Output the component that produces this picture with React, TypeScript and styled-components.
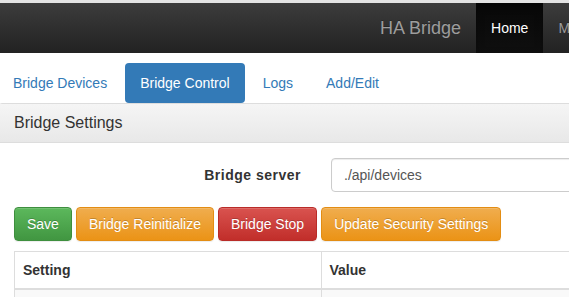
import styled, { createGlobalStyle, css } from 'styled-components';

type Variant = 'success' | 'warning' | 'danger';

const settings = [
	{ name: 'bridge.upnpconfigaddress', value: '192.168.1.20' },
	{ name: 'bridge.serverport', value: '8080' },
	{ name: 'bridge.upnpresponseport', value: '50000' },
];

const actions: { label: string; variant: Variant }[] = [
	{ label: 'Save', variant: 'success' },
	{ label: 'Bridge Reinitialize', variant: 'warning' },
	{ label: 'Bridge Stop', variant: 'danger' },
	{ label: 'Update Security Settings', variant: 'warning' },
];

function App() {
	return (
		<>
			<GlobalStyle />
			<Navbar>
				<Brand>HA Bridge</Brand>
				<NavLink $active>Home</NavLink>
				<NavLink>Manage</NavLink>
			</Navbar>

			<Page>
				<Pills>
					<Pill>Bridge Devices</Pill>
					<Pill $active>Bridge Control</Pill>
					<Pill>Logs</Pill>
					<Pill>Add/Edit</Pill>
				</Pills>

				<Panel>
					<PanelHeading>Bridge Settings</PanelHeading>
					<PanelBody>
						<FormRow>
							<Label>Bridge server</Label>
							<InputCell>
								<Input defaultValue="./api/devices" />
							</InputCell>
						</FormRow>

						<Buttons>
							{actions.map((a) => (
								<Button key={a.label} $variant={a.variant}>
									{a.label}
								</Button>
							))}
						</Buttons>

						<Table>
							<thead>
								<tr>
									<Th>Setting</Th>
									<Th>Value</Th>
								</tr>
							</thead>
							<tbody>
								{settings.map((s) => (
									<Tr key={s.name}>
										<Td>{s.name}</Td>
										<Td>{s.value}</Td>
									</Tr>
								))}
							</tbody>
						</Table>
					</PanelBody>
				</Panel>
			</Page>
		</>
	);
}

const GlobalStyle = createGlobalStyle`
	html, body {
		overflow: hidden;
	}
	body {
		margin: 0;
		background: #fff;
		color: #333;
		font-family: "Liberation Sans", Arial, sans-serif;
		font-size: 14px;
		line-height: 20px;
	}
	* {
		box-sizing: border-box;
	}
`;

const Navbar = styled.nav`
	display: flex;
	height: 53px;
	padding-left: 365px;
	border-top: 3px solid #e4e4e4;
	background: linear-gradient(to bottom, #3c3c3c 0%, #222 100%);
	white-space: nowrap;
	overflow: hidden;
`;

const Brand = styled.a`
	padding: 15px;
	font-size: 18px;
	line-height: 20px;
	color: #9d9d9d;
	text-shadow: 0 -1px 0 rgba(0, 0, 0, 0.25);
`;

const NavLink = styled.a<{ $active?: boolean }>`
	padding: 15px;
	line-height: 20px;
	color: #9d9d9d;
	text-shadow: 0 -1px 0 rgba(0, 0, 0, 0.25);

	${(p) =>
		p.$active &&
		css`
			color: #fff;
			background: linear-gradient(to bottom, #080808 0%, #0f0f0f 100%);
			box-shadow: inset 0 3px 9px rgba(0, 0, 0, 0.25);
		`}
`;

const Page = styled.div`
	margin-left: -2px;
	width: 660px;
`;

const Pills = styled.ul`
	display: flex;
	margin: 10px 0 0;
	padding: 0;
	list-style: none;
`;

const Pill = styled.li<{ $active?: boolean }>`
	padding: 10px 15px;
	border-radius: 4px;
	line-height: 20px;
	color: ${(p) => (p.$active ? '#fff' : '#337ab7')};
	background: ${(p) => (p.$active ? '#337ab7' : 'transparent')};

	& + & {
		margin-left: 3px;
	}
`;

const Panel = styled.section`
	border: 1px solid #ddd;
	border-radius: 4px;
`;

const PanelHeading = styled.h3`
	margin: 0;
	padding: 10px 15px;
	border-bottom: 1px solid #ddd;
	background: linear-gradient(to bottom, #f5f5f5 0%, #e8e8e8 100%);
	font-size: 16px;
	font-weight: normal;
	line-height: 18px;
	color: #333;
`;

const PanelBody = styled.div`
	padding: 15px;
`;

const FormRow = styled.div`
	display: grid;
	grid-template-columns: 302px 1fr;
	align-items: center;
`;

const Label = styled.label`
	padding-right: 15px;
	text-align: right;
	font-weight: bold;
	letter-spacing: 0.5px;
`;

const InputCell = styled.div`
	padding-left: 15px;
`;

const Input = styled.input`
	display: block;
	width: 100%;
	height: 34px;
	padding: 6px 12px;
	border: 1px solid #ccc;
	border-radius: 4px;
	box-shadow: inset 0 1px 1px rgba(0, 0, 0, 0.075);
	font-family: inherit;
	font-size: 14px;
	color: #555;
`;

const Buttons = styled.div`
	display: flex;
	gap: 4px;
	margin-top: 15px;
`;

const palette: Record<Variant, [string, string, string]> = {
	success: ['#5cb85c', '#419641', '#3e8f3e'],
	warning: ['#f0ad4e', '#eb9316', '#e38d13'],
	danger: ['#d9534f', '#c12e2a', '#b92c28'],
};

const Button = styled.button<{ $variant: Variant }>`
	padding: 6px 12px;
	border: 1px solid ${(p) => palette[p.$variant][2]};
	border-radius: 4px;
	background: linear-gradient(
		to bottom,
		${(p) => palette[p.$variant][0]} 0%,
		${(p) => palette[p.$variant][1]} 100%
	);
	box-shadow: inset 0 1px 0 rgba(255, 255, 255, 0.15), 0 1px 1px rgba(0, 0, 0, 0.075);
	font-family: inherit;
	font-size: 14px;
	line-height: 20px;
	color: #fff;
	text-shadow: 0 -1px 0 rgba(0, 0, 0, 0.2);
	white-space: nowrap;
`;

const Table = styled.table`
	width: 614px;
	margin-top: 10px;
	border-collapse: collapse;
	table-layout: fixed;
	border: 1px solid #ddd;
`;

const Th = styled.th`
	width: 50%;
	padding: 8px;
	border: 1px solid #ddd;
	border-bottom-width: 2px;
	text-align: left;
	line-height: 20px;
`;

const Tr = styled.tr`
	&:nth-child(odd) {
		background: #f9f9f9;
	}
`;

const Td = styled.td`
	padding: 8px;
	border: 1px solid #ddd;
	line-height: 20px;
`;

export default App;
